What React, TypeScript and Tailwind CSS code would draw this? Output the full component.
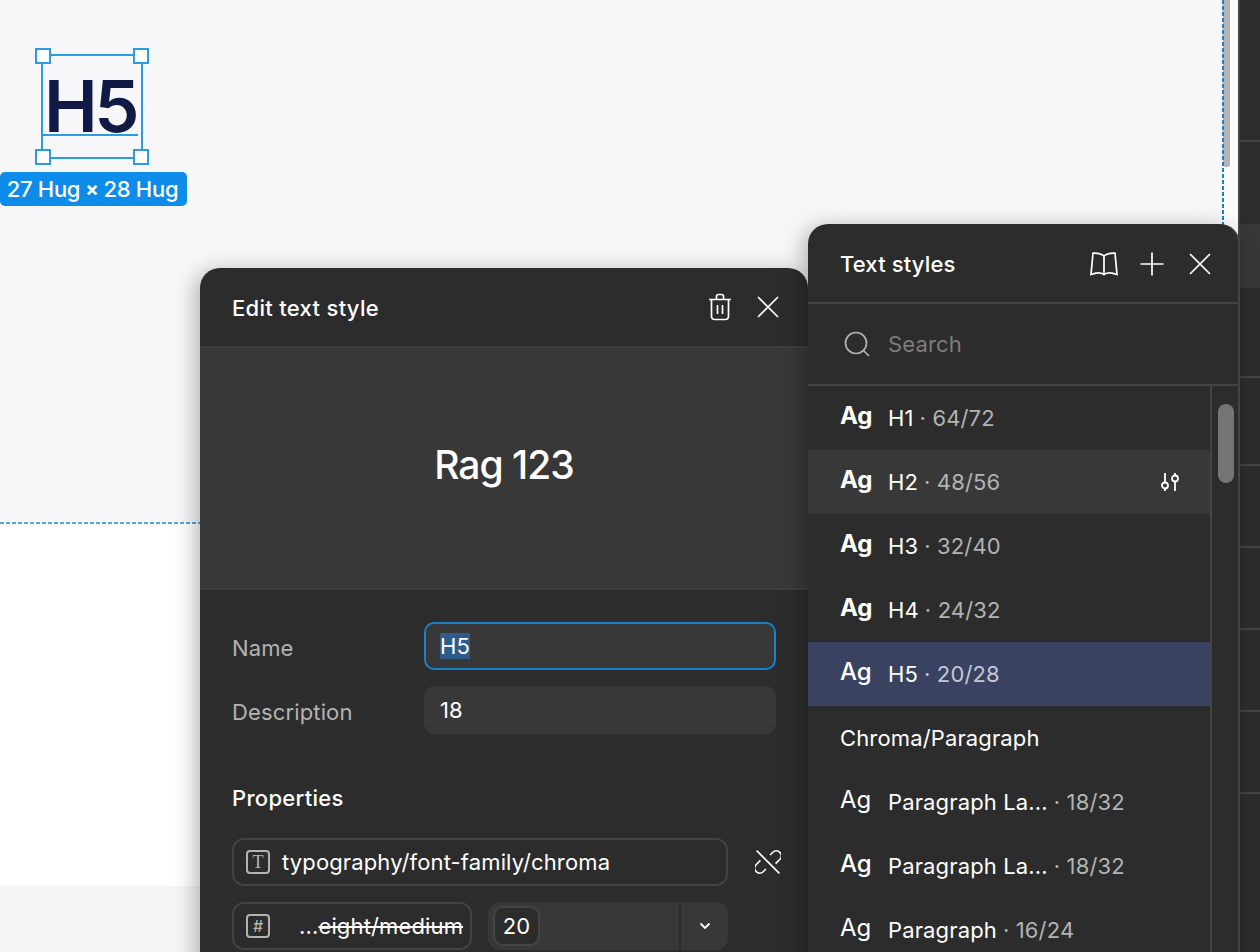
const STYLES = [
  { name: 'H1', size: '64/72', bold: true },
  { name: 'H2', size: '48/56', bold: true, hover: true },
  { name: 'H3', size: '32/40', bold: true },
  { name: 'H4', size: '24/32', bold: true },
  { name: 'H5', size: '20/28', bold: false, active: true },
];

const PARAGRAPHS = [
  { name: 'Paragraph La...', size: '18/32', weight: 'font-normal' },
  { name: 'Paragraph La...', size: '18/32', weight: 'font-medium' },
  { name: 'Paragraph', size: '16/24', weight: 'font-normal' },
];

function CloseIcon() {
  return (
    <svg width="24" height="24" viewBox="0 0 24 24" fill="none" stroke="white" strokeWidth="1.7">
      <path d="M2 2 22 22M22 2 2 22" />
    </svg>
  );
}

function TrashIcon() {
  return (
    <svg width="24" height="28" viewBox="0 0 24 28" fill="none" stroke="white" strokeWidth="1.7">
      <path d="M1 6.5h22M8.5 6V3.5A2 2 0 0 1 10.5 1.5h3a2 2 0 0 1 2 2V6M3.5 7v16.5a3 3 0 0 0 3 3h11a3 3 0 0 0 3-3V7M9.5 12v9M14.5 12v9" />
    </svg>
  );
}

function BookIcon() {
  return (
    <svg width="28" height="24" viewBox="0 0 28 24" fill="none" stroke="white" strokeWidth="1.7">
      <path d="M14 4C11 1.5 7 1 3 1.2L1 22.5C6 20.5 11 20.5 14 22.5C17 20.5 22 20.5 27 22.5L25 1.2C21 1 17 1.5 14 4ZM14 4V22.5" />
    </svg>
  );
}

function PlusIcon() {
  return (
    <svg width="24" height="24" viewBox="0 0 24 24" fill="none" stroke="white" strokeWidth="1.7">
      <path d="M12 0.5V23.5M0.5 12H23.5" />
    </svg>
  );
}

function SearchIcon() {
  return (
    <svg width="26" height="26" viewBox="0 0 26 26" fill="none" stroke="#b3b3b3" strokeWidth="1.7">
      <circle cx="12" cy="12" r="10.5" />
      <path d="M19.5 19.5 25 25" />
    </svg>
  );
}

function TuneIcon() {
  return (
    <svg width="20" height="20" viewBox="0 0 20 20" fill="none" stroke="white" strokeWidth="1.8">
      <path d="M5 1V10.5M5 16.5V19M15 1V3.5M15 9.5V19" />
      <circle cx="5" cy="13.5" r="3" />
      <circle cx="15" cy="6.5" r="3" />
    </svg>
  );
}

function UnlinkIcon() {
  return (
    <svg width="26" height="26" viewBox="0 0 24 24" fill="none" stroke="white" strokeWidth="1.5">
      <path d="M1.5 1.5 22.5 22.5M14 5.5 16.5 3a4.6 4.6 0 0 1 6.5 6.5L19 13.5M10 18.5 7.5 21A4.6 4.6 0 0 1 1 14.5L5 10.5" />
    </svg>
  );
}

function Chevron() {
  return (
    <svg width="12" height="8" viewBox="0 0 12 8" fill="none" stroke="white" strokeWidth="1.8">
      <path d="M1.5 1.5 6 6l4.5-4.5" />
    </svg>
  );
}

function TokenBadge({ glyph, serif }: { glyph: string; serif?: boolean }) {
  return (
    <span
      className={`flex h-[24px] w-[24px] shrink-0 items-center justify-center rounded-[4px] border-2 border-[#b3b3b3] leading-none tracking-normal text-[#b3b3b3] ${
        serif ? "font-['Liberation_Serif',serif] text-[18px] font-normal" : "text-[16px] font-medium"
      }`}
    >
      {glyph}
    </span>
  );
}

function Handle({ className }: { className: string }) {
  return <div className={`absolute h-[16px] w-[16px] border-2 border-[#2c9ce0] bg-white ${className}`} />;
}

function StyleRow({ children, className = '', action }: { children: React.ReactNode; className?: string; action?: React.ReactNode }) {
  return (
    <div className={`flex h-[64px] items-center pl-8 pr-[30px] ${className}`}>
      {children}
      {action && <span className="ml-auto flex">{action}</span>}
    </div>
  );
}

function Ag({ bold }: { bold?: boolean | string }) {
  const weight = bold === true ? 'font-bold' : bold === false || !bold ? 'font-medium' : bold;
  return <span className={`-mt-1 w-12 shrink-0 text-[24px] leading-none tracking-normal text-white ${weight}`}>Ag</span>;
}

export default function App() {
  return (
    <div className="relative flex h-[952px] w-[1260px] overflow-hidden font-['Inter',sans-serif] text-[22px] tracking-[0.14px] text-white">
      <div className="flex w-[1238px] shrink-0 flex-col">
        <div className="relative z-10 h-[523px] bg-[#f7f7fa]">
          <div className="absolute right-0 top-0 h-full w-[15px] bg-[#fbfbfc]" />
          <div className="absolute right-[8px] top-0 h-[167px] w-[7px] rounded-b-[3px] bg-[#b3b3b3]" />
          <div className="absolute left-[1222px] top-0 h-[230px] w-[2px] bg-[repeating-linear-gradient(180deg,#1a80c8_0_4px,transparent_4px_6px)]" />
          <div className="absolute -bottom-[1px] left-0 h-[2px] w-[210px] bg-[repeating-linear-gradient(90deg,#4fa9e0_0_4px,transparent_4px_6px)]" />

          <div className="absolute left-[41px] top-[54px] h-[105px] w-[102px] border-2 border-[#2c9ce0]">
            <span className="absolute left-[1px] top-0 text-[72px] font-semibold leading-[100px] tracking-[-3.5px] text-[#111a44]">
              H5
            </span>
            <div className="absolute left-0 top-[78px] h-[2px] w-[95px] bg-[#2c9ce0]" />
            <Handle className="-left-[8px] -top-[8px]" />
            <Handle className="-right-[8px] -top-[8px]" />
            <Handle className="-bottom-[8px] -left-[8px]" />
            <Handle className="-bottom-[8px] -right-[8px]" />
          </div>
          <div className="absolute left-0 top-[172px] flex h-[34px] w-[187px] items-center justify-center rounded-[5px] bg-[#0d8ce9] pr-[2px] font-medium tracking-[-0.3px]">
            27 Hug <span className="mx-[5px] text-[20px] font-bold">×</span> 28 Hug
          </div>
        </div>
        <div className="h-[363px] bg-white" />
        <div className="flex-1 bg-[#f5f5f5]" />
      </div>

      <div className="flex flex-1 flex-col border-l-2 border-[#444444] bg-[#2c2c2c]">
        <div className="h-[142px] border-b-2 border-[#444444]" />
        <div className="h-[82px]" />
        <div className="h-[64px] bg-[#383838]" />
        <div className="h-[90px] border-b-2 border-[#444444]" />
        <div className="h-[88px] border-b-2 border-[#444444]" />
        <div className="h-[82px] border-b-2 border-[#444444]" />
        <div className="h-[82px] border-b-2 border-[#444444]" />
        <div className="h-[82px] border-b-2 border-[#444444]" />
        <div className="h-[82px] border-b-2 border-[#444444]" />
      </div>

      {/* edit panel */}
      <div className="absolute left-[200px] top-[268px] z-20 h-[700px] w-[608px] rounded-t-[20px] bg-[#2c2c2c] shadow-[-4px_4px_22px_rgba(0,0,0,0.3)]">
        <div className="flex h-[80px] items-center justify-between border-b-2 border-[#3f3f3f] pl-8 pr-[28px] pt-[2px]">
          <span className="font-medium tracking-[0.3px]">Edit text style</span>
          <div className="-mt-[2px] flex items-center gap-[24px]">
            <TrashIcon />
            <CloseIcon />
          </div>
        </div>
        <div className="flex h-[242px] items-center justify-center border-b-2 border-[#3f3f3f] bg-[#383838] pb-[6px]">
          <span className="text-[39px] font-medium tracking-[-1px]">Rag 123</span>
        </div>

        <div className="px-8 pt-[32px]">
          <div className="flex h-[48px] items-center justify-between">
            <span className="mt-1 text-[#b3b3b3]">Name</span>
            <div className="flex h-[48px] w-[352px] items-center rounded-[10px] border-2 border-[#1a80c8] bg-[#383838] pl-[14px]">
              <span className="bg-[#2f5a8a] leading-[26px]">H5</span>
            </div>
          </div>
          <div className="mt-4 flex h-[48px] items-center justify-between">
            <span className="mt-1 text-[#b3b3b3]">Description</span>
            <div className="flex h-[48px] w-[352px] items-center rounded-[10px] bg-[#383838] pl-[16px]">18</div>
          </div>

          <div className="mt-[48px] font-medium tracking-[0.3px]">Properties</div>

          <div className="mt-[23px] flex items-center">
            <div className="flex h-[48px] w-[496px] shrink-0 items-center gap-[12px] rounded-[12px] border-2 border-[#444444] pl-[12px]">
              <TokenBadge glyph="T" serif />
              <span>typography/font-family/chroma</span>
            </div>
            <span className="ml-[27px] flex">
              <UnlinkIcon />
            </span>
          </div>

          <div className="mt-4 flex w-[496px] gap-4">
            <div className="flex h-[48px] w-[240px] items-center rounded-[12px] border-2 border-[#444444] pl-[12px]">
              <TokenBadge glyph="#" />
              <span className="ml-[29px]">
                ...<span className="line-through">eight/medium</span>
              </span>
            </div>
            <div className="flex h-[48px] flex-1 items-center rounded-[12px] bg-[#383838]">
              <span className="ml-[5px] flex h-[40px] w-[47px] items-center justify-center rounded-[10px] border-2 border-[#444444] bg-[#2c2c2c]">
                20
              </span>
              <div className="ml-auto flex h-full w-[49px] items-center justify-center border-l-2 border-[#2c2c2c]">
                <Chevron />
              </div>
            </div>
          </div>
        </div>
      </div>

      {/* text styles panel */}
      <div className="absolute left-[808px] top-[224px] z-20 h-[760px] w-[432px] rounded-t-[20px] border-r-2 border-[#444444] bg-[#2c2c2c] shadow-[-4px_4px_22px_rgba(0,0,0,0.3)]">
        <div className="flex h-[80px] items-center border-b-2 border-[#444444] pl-8 pr-[26px] pt-[2px]">
          <span className="font-medium">Text styles</span>
          <div className="ml-auto flex items-center">
            <BookIcon />
            <span className="ml-[22px] flex">
              <PlusIcon />
            </span>
            <span className="ml-[24px] flex">
              <CloseIcon />
            </span>
          </div>
        </div>
        <div className="flex h-[82px] items-center gap-[18px] border-b-2 border-[#444444] pl-[36px]">
          <SearchIcon />
          <span className="text-[#7d7d7d]">Search</span>
        </div>
        <div className="flex">
          <div className="flex-1">
            {STYLES.map((s) => (
              <StyleRow
                key={s.name}
                className={s.active ? 'bg-[#3a4262]' : s.hover ? 'bg-[#383838]' : ''}
                action={s.hover ? <TuneIcon /> : undefined}
              >
                <Ag bold={s.bold} />
                <span>{s.name}</span>
                <span className={`ml-[6px] ${s.active ? 'text-[#c4c7d3]' : 'text-[#b3b3b3]'}`}>· {s.size}</span>
              </StyleRow>
            ))}
            <StyleRow>
              <span>Chroma/Paragraph</span>
            </StyleRow>
            {PARAGRAPHS.map((p, i) => (
              <StyleRow key={i}>
                <Ag bold={p.weight} />
                <span>{p.name}</span>
                <span className="ml-[6px] text-[#b3b3b3]">· {p.size}</span>
              </StyleRow>
            ))}
          </div>
          <div className="relative w-[28px] border-l-2 border-[#444444]">
            <div className="absolute left-[6px] top-[18px] h-[79px] w-[16px] rounded-full bg-[#757575]" />
          </div>
        </div>
      </div>
    </div>
  );
}
